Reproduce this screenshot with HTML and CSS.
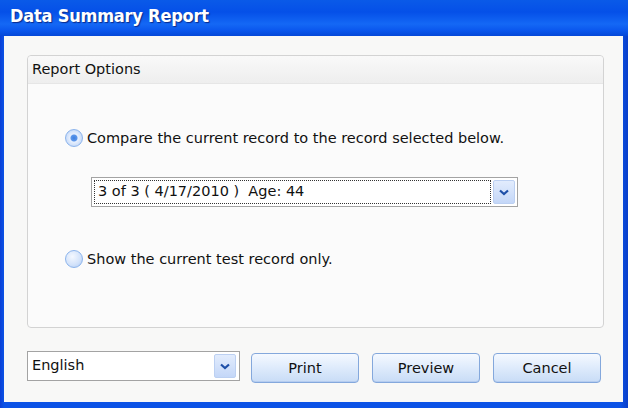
FILE: index.html
```html
<!DOCTYPE html>
<html lang="en">
<head>
  <meta charset="UTF-8" />
  <title>Data Summary Report</title>
  <link rel="stylesheet" href="styles.css">
</head>
<body>
  <div class="window">
    <div class="title-bar">Data Summary Report</div>

    <div class="client">
      <fieldset class="group">
        <div class="group-header">Report Options</div>

        <div class="group-body">
          <label class="radio-row first">
            <span class="radio checked"></span>
            <span>Compare the current record to the record selected below.</span>
          </label>

          <div class="combo record-combo">
            <div class="combo-text focused">3 of 3 ( 4/17/2010 )&nbsp; Age: 44</div>
            <div class="drop-btn">
              <svg width="10" height="7" viewBox="0 0 10 7"><path d="M1 1.5 L5 5 L9 1.5" fill="none" stroke="#1d4fa8" stroke-width="2.2"/></svg>
            </div>
          </div>

          <label class="radio-row second">
            <span class="radio"></span>
            <span>Show the current test record only.</span>
          </label>
        </div>
      </fieldset>

      <div class="bottom-row">
        <div class="combo lang-combo">
          <div class="combo-text">English</div>
          <div class="drop-btn">
            <svg width="10" height="7" viewBox="0 0 10 7"><path d="M1 1.5 L5 5 L9 1.5" fill="none" stroke="#1d4fa8" stroke-width="2.2"/></svg>
          </div>
        </div>
        <button class="xp-button">Print</button>
        <button class="xp-button">Preview</button>
        <button class="xp-button">Cancel</button>
      </div>
    </div>
  </div>
</body>
</html>
```

FILE: styles.css
```css
* {
  box-sizing: border-box;
  margin: 0;
  padding: 0;
}

body {
  width: 628px;
  height: 408px;
  overflow: hidden;
  font-family: 'DejaVu Sans', sans-serif;
  font-size: 14.5px;
  color: #111;
}

.window {
  display: flex;
  flex-direction: column;
  height: 408px;
  background: linear-gradient(to right, #0a3fd6 0, #0b52e6 4px, #0b52e6 620px, #0a3ec8 628px);
}

.title-bar {
  height: 36px;
  padding: 5px 0 0 10px;
  color: #fff;
  font-family: 'DejaVu Sans Condensed', 'DejaVu Sans', sans-serif;
  font-weight: bold;
  font-size: 18px;
  letter-spacing: -0.2px;
  text-shadow: 1px 1px 1px #0a2a8a;
  background: linear-gradient(to bottom, #0a5ae8 0, #0550e8 12px, #1468f5 24px, #0b58ee 30px, #0548d8 36px);
}

.client {
  flex: 1;
  margin: 0 5px 6px 4px;
  padding: 19px 0 0 23px;
  background: #f8f8f7;
  display: flex;
  flex-direction: column;
}

.group {
  width: 577px;
  height: 273px;
  border: 1px solid #d3d3d3;
  border-radius: 4px;
  background: #fbfbfb;
  display: flex;
  flex-direction: column;
}

.group-header {
  height: 28px;
  padding: 5px 0 0 4px;
  border-bottom: 1px solid #e6e6e6;
  background: linear-gradient(to bottom, #f9f9f9, #eeeeee);
  border-radius: 4px 4px 0 0;
}

.group-body {
  padding: 0 0 0 37px;
  display: flex;
  flex-direction: column;
}

.radio-row {
  display: flex;
  align-items: center;
  gap: 4px;
}

.radio-row.first {
  margin-top: 45px;
}

.radio-row.second {
  margin-top: 43px;
}

.radio {
  width: 18px;
  height: 18px;
  border-radius: 50%;
  border: 1px solid #8cb4ec;
  background: radial-gradient(circle at 40% 35%, #f4f8ff 0, #d2e2fa 60%, #a9c6f2 100%);
}

.radio.checked {
  background: radial-gradient(circle, #3d7fe0 0, #5c96ea 3px, #e8f0fd 4px, #cfe0fa 65%, #9dbdf0 100%);
}

.combo {
  display: flex;
  align-items: center;
  border: 1px solid #a3a3a3;
  background: #fff;
  height: 30px;
  padding: 2px;
}

.record-combo {
  width: 427px;
  margin: 30px 0 0 26px;
}

.combo-text {
  flex: 1;
  height: 100%;
  padding: 3px 0 0 3px;
  white-space: nowrap;
}

.combo-text.focused {
  border: 1px dotted #333;
  padding-top: 2px;
  margin-right: 2px;
}

.drop-btn {
  width: 22px;
  height: 24px;
  border: 1px solid #bcd0f2;
  border-radius: 2px;
  background: linear-gradient(to bottom, #e2ecfd, #c4d7f8);
  display: flex;
  align-items: center;
  justify-content: center;
}

.bottom-row {
  display: flex;
  align-items: flex-start;
  margin-top: 23px;
}

.lang-combo {
  width: 213px;
  padding-right: 3px;
}

.lang-combo .combo-text {
  padding-left: 2px;
}

.xp-button {
  width: 108px;
  height: 30px;
  margin-top: 2px;
  margin-left: 13px;
  border: 1px solid #84a8dc;
  border-radius: 4px;
  font-family: inherit;
  font-size: 14.5px;
  color: #111;
  background: linear-gradient(to bottom, #f5f9ff 0, #e0ecfc 45%, #c8dcf6 100%);
  box-shadow: inset 0 -1px 0 #b6cdf0;
}

.lang-combo + .xp-button {
  margin-left: 11px;
}
```
